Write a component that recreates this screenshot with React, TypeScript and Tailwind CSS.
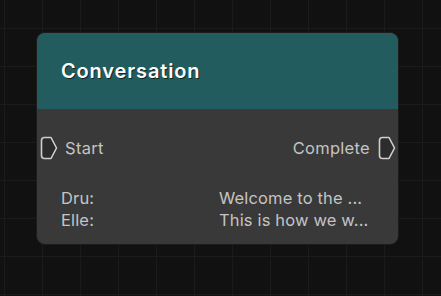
import React from "react";

function Port() {
  return (
    <svg width="18" height="24" viewBox="0 0 18 24" fill="none">
      <path
        d="M4.5 1.5 H11 L16.5 12 L11 22.5 H4.5 Q1.5 22.5 1.5 19.5 V4.5 Q1.5 1.5 4.5 1.5 Z"
        fill="#2c2c2c"
        stroke="#cfcfcf"
        strokeWidth="1.6"
        strokeLinejoin="round"
      />
    </svg>
  );
}

export default function App() {
  return (
    <div className="relative w-[441px] h-[296px] overflow-hidden bg-[#111111] bg-[linear-gradient(to_right,#1b1b1b_1px,transparent_1px),linear-gradient(to_bottom,#1b1b1b_1px,transparent_1px)] bg-[size:38px_38px] bg-[position:4px_28px] font-['Inter',sans-serif]">
      {/* node */}
      <div className="absolute left-[36px] top-[32px] w-[363px] h-[213px] rounded-[9px] overflow-hidden border border-[#1c1c1c] flex flex-col bg-[#393939]">
        <div className="h-[76px] shrink-0 bg-[#225c5e] flex items-center pl-[24px] pb-[1px]">
          <span className="text-[20px] font-semibold text-white tracking-[0.85px] [text-shadow:1px_1px_0_rgba(0,0,0,0.6)]">
            Conversation
          </span>
        </div>
        <div className="flex items-center justify-between mt-[27px] pl-[3px] pr-[2px] text-[16.5px] tracking-[0.3px] text-[#c4c4c4]">
          <div className="flex items-center gap-[7px]">
            <Port />
            <span>Start</span>
          </div>
          <div className="flex items-center gap-[8px]">
            <span>Complete</span>
            <Port />
          </div>
        </div>
        <div className="grid grid-cols-[158px_1fr] mt-[26px] pl-[24px] text-[16.5px] tracking-[0.15px] leading-[22px] text-[#c4c4c4]">
          <span>Dru:</span>
          <span>Welcome to the ...</span>
          <span>Elle:</span>
          <span>This is how we w...</span>
        </div>
      </div>
    </div>
  );
}
